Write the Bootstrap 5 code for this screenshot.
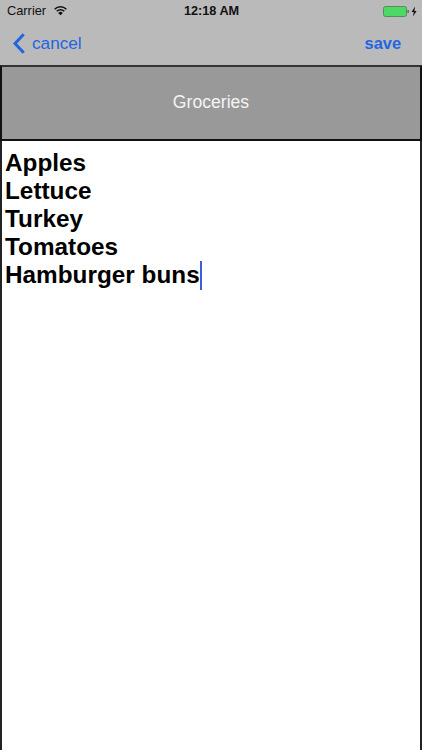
<!DOCTYPE html>
<html lang="en">
<head>
<meta charset="utf-8">
<title>Groceries</title>
<link href="https://cdn.jsdelivr.net/npm/bootstrap@5.3.0/dist/css/bootstrap.min.css" rel="stylesheet">
<style>
html,body{height:750px;overflow:hidden;background:#fff}
body{font-family:"Liberation Sans",Arial,sans-serif}
.shell{width:422px;height:750px}
.topbar{background:#bababa;height:65px;flex:none}
.statusline{height:22px;padding:0 4px 0 7px;font-size:12px;color:#111;position:relative}
.clock{position:absolute;left:1px;right:0;top:3px;text-align:center;font-weight:700;font-size:12.7px;line-height:16px}
.carrier{font-size:12.8px;line-height:16px;margin-top:-1px}
.actionline{height:43px;padding:0 21px 1px 13px}
.tint{color:#1f66e0;font-size:17.2px;line-height:22px;text-decoration:none}
.tint.strong{font-weight:700;font-size:16.4px}
.gapper{gap:7px}
.heading{height:76px;flex:none;background:#999;border:2px solid #111;border-top-color:#333;color:#f4f4f4;font-size:17.6px;padding-bottom:1px}
.notes{flex:1;border-left:2px solid #222;border-right:2px solid #222;padding:8px 3px;font-weight:700;font-size:24.3px;line-height:28px;color:#000;letter-spacing:.02px}
.caret{display:inline-block;width:2px;height:29px;background:#3f5fd8;vertical-align:top}
</style>
</head>
<body>
<div class="shell d-flex flex-column">
  <div class="topbar d-flex flex-column">
    <div class="statusline d-flex align-items-center justify-content-between">
      <div class="d-flex align-items-center gap-2">
        <span class="carrier">Carrier</span>
        <svg width="13" height="10" viewBox="0 0 13 10" aria-hidden="true"><path d="M.6 3.2a8.4 8.4 0 0 1 11.8 0M2.7 5.3a5.4 5.4 0 0 1 7.6 0" fill="none" stroke="#111" stroke-width="1.5"/><path d="M4.2 6.9a3.3 3.3 0 0 1 4.6 0L6.5 9.3z" fill="#111"/></svg>
      </div>
      <span class="clock">12:18 AM</span>
      <div class="d-flex align-items-center">
        <svg width="35" height="11" viewBox="0 0 35 11" aria-hidden="true"><rect x=".5" y=".5" width="23" height="10" rx="2" fill="#4cd964" stroke="#5a8a60"/><rect x="24.5" y="4" width="1.2" height="3" fill="#555"/><path d="M32 .5 28.6 6h2.2l-.8 4.5L33.6 5h-2.2z" fill="#111"/></svg>
      </div>
    </div>
    <div class="actionline d-flex align-items-center justify-content-between">
      <a class="tint d-flex align-items-center gapper" href="#">
        <svg width="12" height="21" viewBox="0 0 12 21" aria-hidden="true"><path d="M10.7 1.2 2 10.5l8.7 9.3" fill="none" stroke="#1f66e0" stroke-width="3"/></svg>
        <span>cancel</span>
      </a>
      <a class="tint strong" href="#">save</a>
    </div>
  </div>
  <div class="heading d-flex align-items-center justify-content-center">Groceries</div>
  <div class="notes">Apples<br>Lettuce<br>Turkey<br>Tomatoes<br>Hamburger buns<span class="caret"></span></div>
</div>
<script src="https://cdn.jsdelivr.net/npm/bootstrap@5.3.0/dist/js/bootstrap.bundle.min.js"></script>
</body>
</html>
